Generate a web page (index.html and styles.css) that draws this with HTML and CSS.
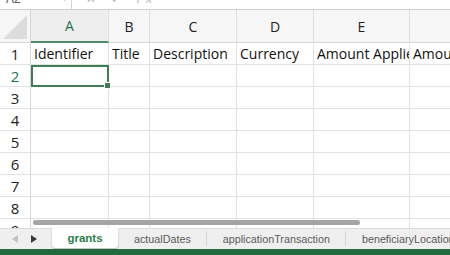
FILE: index.html
```html
<!DOCTYPE html>
<html lang="en">
<head>
    <meta charset="UTF-8">
    <title>grants - Workbook</title>
    <link rel="stylesheet" href="styles.css">
</head>
<body>
    <div class="window">
        <div class="formula-bar">
            <div class="name-box">A2 <span class="caret">&#9662;</span></div>
            <div class="fx-icons">&#10005; &#10003; <i>fx</i></div>
        </div>

        <div class="sheet">
            <div class="grid">
                <div class="corner"><span class="corner-tri"></span></div>
                <div class="col-head selected">A</div>
                <div class="col-head">B</div>
                <div class="col-head">C</div>
                <div class="col-head">D</div>
                <div class="col-head">E</div>
                <div class="col-head"></div>

                <div class="row-head">1</div>
                <div class="cell">Identifier</div>
                <div class="cell">Title</div>
                <div class="cell">Description</div>
                <div class="cell">Currency</div>
                <div class="cell">Amount Applied</div>
                <div class="cell">Amount Awarded</div>

                <div class="row-head selected">2</div>
                <div class="cell active"><span class="handle"></span></div>
                <div class="cell"></div><div class="cell"></div><div class="cell"></div><div class="cell"></div><div class="cell"></div>

                <div class="row-head">3</div>
                <div class="cell"></div><div class="cell"></div><div class="cell"></div><div class="cell"></div><div class="cell"></div><div class="cell"></div>
                <div class="row-head">4</div>
                <div class="cell"></div><div class="cell"></div><div class="cell"></div><div class="cell"></div><div class="cell"></div><div class="cell"></div>
                <div class="row-head">5</div>
                <div class="cell"></div><div class="cell"></div><div class="cell"></div><div class="cell"></div><div class="cell"></div><div class="cell"></div>
                <div class="row-head">6</div>
                <div class="cell"></div><div class="cell"></div><div class="cell"></div><div class="cell"></div><div class="cell"></div><div class="cell"></div>
                <div class="row-head">7</div>
                <div class="cell"></div><div class="cell"></div><div class="cell"></div><div class="cell"></div><div class="cell"></div><div class="cell"></div>
                <div class="row-head">8</div>
                <div class="cell"></div><div class="cell"></div><div class="cell"></div><div class="cell"></div><div class="cell"></div><div class="cell"></div>
                <div class="row-head">9</div>
                <div class="cell"></div><div class="cell"></div><div class="cell"></div><div class="cell"></div><div class="cell"></div><div class="cell"></div>
            </div>
            <div class="hscroll"></div>
        </div>

        <div class="tab-bar">
            <div class="tab-nav">
                <span class="arrow-left"></span>
                <span class="arrow-right"></span>
            </div>
            <div class="tab active">grants</div>
            <div class="tab">actualDates</div>
            <div class="tab">applicationTransaction</div>
            <div class="tab">beneficiaryLocation</div>
        </div>
        <div class="status-bar"></div>
    </div>
</body>
</html>
```

FILE: styles.css
```css
body {
    margin: 0;
    background: white;
    font-family: 'Open Sans', 'Noto Sans', sans-serif;
}
.window {
    width: 450px;
    height: 255px;
    display: flex;
    flex-direction: column;
    overflow: hidden;
}

.formula-bar {
    height: 9px;
    flex: none;
    display: flex;
    overflow: hidden;
    border-bottom: 1px solid #cfcfcf;
    font-family: 'Liberation Sans', sans-serif;
    font-size: 12px;
    color: #555;
}
.name-box {
    width: 72px;
    margin-top: -8px;
    padding-left: 6px;
    box-sizing: border-box;
    border-right: 1px solid #d4d4d4;
    display: flex;
    justify-content: space-between;
    padding-right: 4px;
}
.caret {
    font-size: 10px;
    color: #777;
}
.fx-icons {
    margin-top: -8px;
    padding-left: 14px;
    color: #b8b8b8;
    letter-spacing: 6px;
}

/* sheet grid */
.sheet {
    flex: 1;
    position: relative;
    overflow: hidden;
}
.grid {
    display: grid;
    grid-template-columns: 31px 78px 41px 87px 77px 96px 60px;
    grid-template-rows: 33px repeat(9, 22px);
}
.corner {
    background: #f6f6f6;
    border-right: 1px solid #d6d6d6;
    border-bottom: 1px solid #d6d6d6;
    position: relative;
}
.corner-tri {
    position: absolute;
    right: 3px;
    bottom: 3px;
    width: 0;
    height: 0;
    border-left: 24px solid transparent;
    border-bottom: 24px solid #dcdcdc;
}
.col-head {
    background: #f6f6f6;
    border-right: 1px solid #dedede;
    border-bottom: 1px solid #d6d6d6;
    display: flex;
    align-items: center;
    justify-content: center;
    font-size: 14px;
    color: #222;
}
.col-head.selected {
    color: #217346;
    border-bottom: 2px solid #4e8a63;
    background: #eeeeee;
}
.row-head {
    border-right: 1px solid #d6d6d6;
    border-bottom: 1px solid #e2e2e2;
    display: flex;
    align-items: center;
    justify-content: center;
    font-size: 15px;
    color: #222;
}
.row-head.selected {
    color: #217346;
}
.cell {
    border-right: 1px solid #e2e2e2;
    border-bottom: 1px solid #e2e2e2;
    font-size: 14px;
    color: #111;
    padding-left: 3px;
    white-space: nowrap;
    overflow: hidden;
    line-height: 21px;
}
.cell.active {
    position: relative;
    outline: 2px solid #3f7d55;
    outline-offset: -2px;
    overflow: visible;
}
.handle {
    position: absolute;
    right: -3px;
    bottom: -3px;
    width: 5px;
    height: 5px;
    background: #3f7d55;
    border: 1px solid white;
}
.hscroll {
    position: absolute;
    left: 33px;
    bottom: 3px;
    width: 327px;
    height: 5px;
    border-radius: 3px;
    background: #a5a5a5;
}

/* sheet tabs */
.tab-bar {
    height: 20px;
    flex: none;
    display: flex;
    background: #efefef;
    border-top: 1px solid #dadada;
    font-family: 'Liberation Sans', sans-serif;
    font-size: 10.75px;
    color: #5a5a5a;
}
.tab-nav {
    flex: none;
    width: 52px;
    box-sizing: border-box;
    display: flex;
    gap: 13px;
    padding-left: 12px;
    align-items: center;
}
.arrow-left {
    width: 0;
    height: 0;
    border-top: 4px solid transparent;
    border-bottom: 4px solid transparent;
    border-right: 6px solid #c2c2c2;
}
.arrow-right {
    width: 0;
    height: 0;
    border-top: 4px solid transparent;
    border-bottom: 4px solid transparent;
    border-left: 6px solid #3a3a3a;
}
.tab {
    flex: none;
    padding: 0 15px 0 16px;
    display: flex;
    align-items: center;
    border-right: 1px solid #d6d6d6;
    white-space: nowrap;
    margin: 2px 0 3px;
}
.tab.active {
    background: white;
    color: #2e7d4a;
    font-weight: bold;
    font-size: 11.5px;
    margin: -1px 0 1px;
    width: 66px;
    padding: 0;
    justify-content: center;
    border: none;
    border-radius: 0 0 3px 3px;
    box-shadow: 0 1px 2px rgba(0, 0, 0, 0.25);
}
.status-bar {
    height: 6px;
    flex: none;
    background: #1f6b3e;
}
```
